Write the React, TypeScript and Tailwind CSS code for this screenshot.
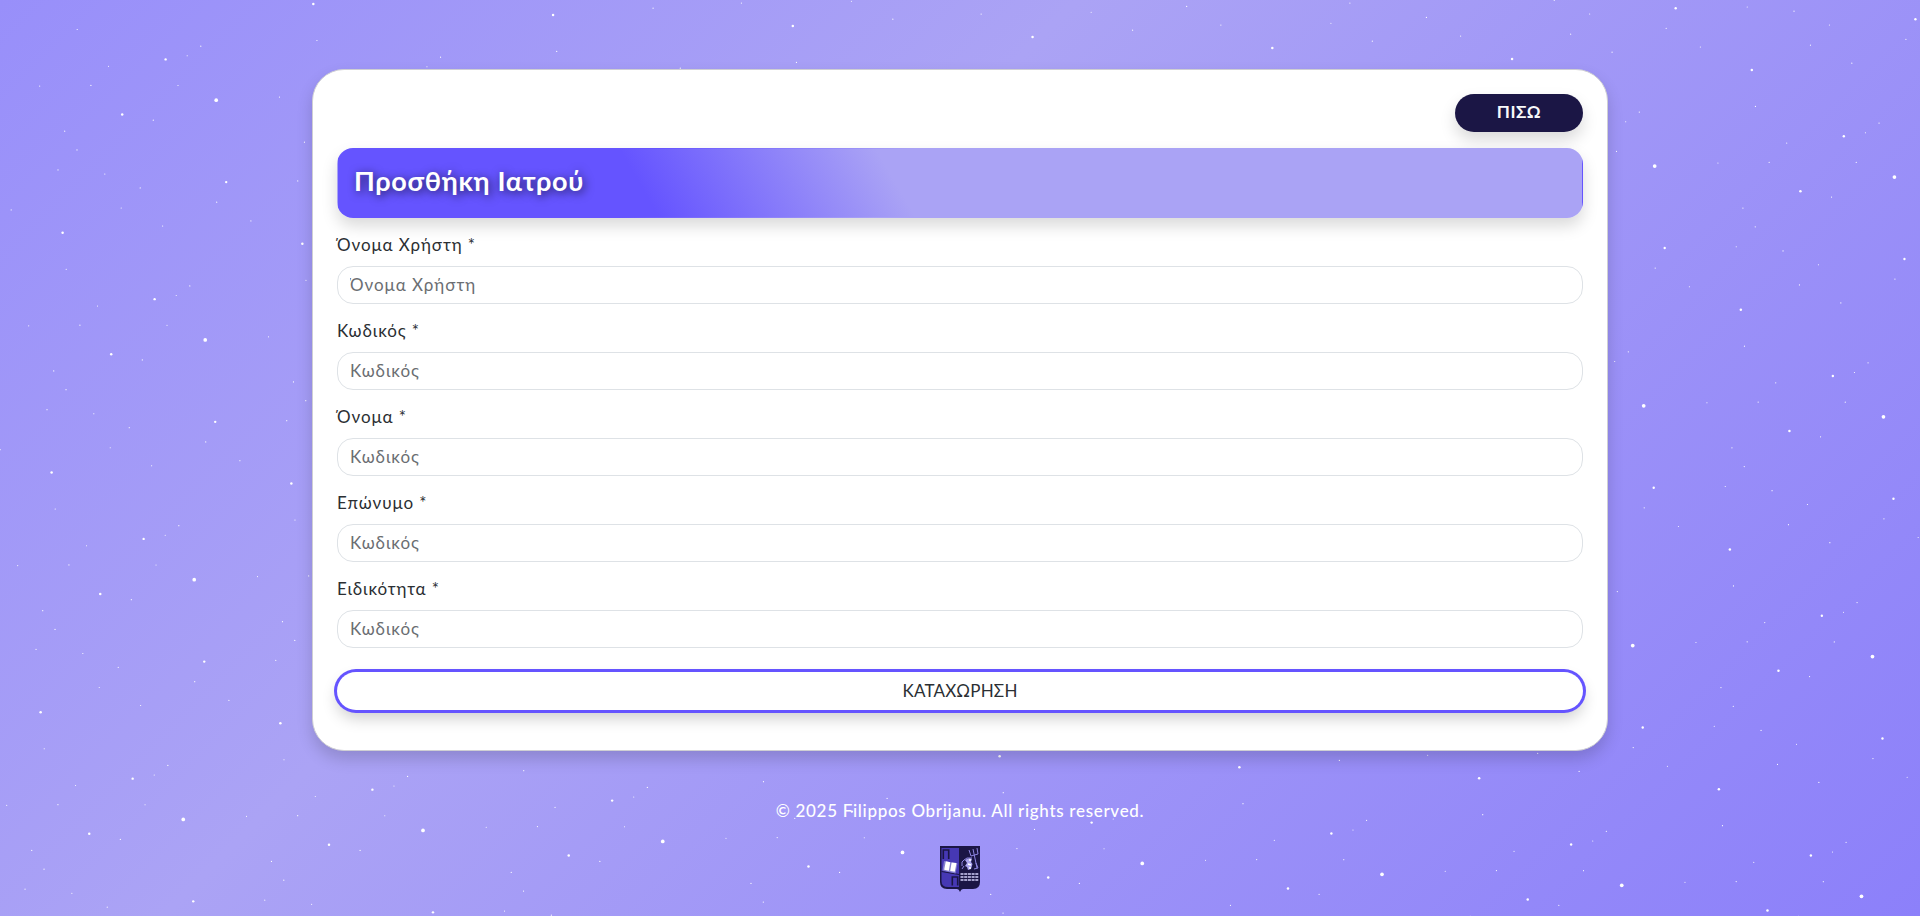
const TILE = 240;
const COS = 0.99895;
const SIN = 0.04577;

// Star positions inside one tile (x, y, radius)
const STARS: [number, number, number][] = [
  [77, 29.3, 0.6], [108.3, 66, 0.55], [39.5, 85.9, 0.55], [90.7, 85.2, 0.6],
  [165.4, 59.2, 1.2], [187, 55.6, 0.55], [200.6, 46, 0.6], [177.8, 85.3, 0.55],
  [216, 100, 1.85], [122, 114.2, 1.25], [153.1, 120, 0.6], [64.5, 131, 0.6],
  [76.8, 149.7, 0.6], [57.8, 169.7, 0.55], [104.6, 173.8, 0.6], [140, 187.7, 0.55],
  [121, 207.8, 0.55], [226, 181.9, 1.2], [216.5, 202, 0.6], [250.7, 220.7, 0.55],
  [162.4, 225.8, 0.6], [62.4, 232.6, 1.25],
];

const COLS = [-2, -1, 0, 1, 2, 3, 4, 5, 6, 7, 8];
const ROWS = [-3, -2, -1, 0, 1, 2, 3, 4];

function Starfield() {
  return (
    <svg className="pointer-events-none absolute inset-0 h-full w-full" viewBox="0 0 1920 916" fill="#fff" aria-hidden="true">
      {ROWS.flatMap((j) =>
        COLS.map((i) => (
          <g key={`${i}:${j}`} transform={`translate(${TILE * (i * COS - j * SIN)} ${TILE * (i * SIN + j * COS)})`}>
            {STARS.map(([x, y, r], n) => (
              <circle key={n} cx={x + 0.2} cy={y + 0.2} r={r} />
            ))}
          </g>
        )),
      )}
    </svg>
  );
}

function Shield() {
  return (
    <svg width="40" height="47" viewBox="0 0 40 47" aria-hidden="true">
      <path d="M0 0H40V36Q40 43 33 43H23Q21 43 20 46Q19 43 17 43H7Q0 43 0 36Z" fill="#1b1645" />
      <path d="M1.5 2H19V41H8Q1.5 41 1.5 35Z" fill="#4638b4" />
      <path d="M3.3 13V4H8.7V13M12.3 39.5V31H17.7V39.5" fill="none" stroke="#1b1645" strokeWidth="1.6" />
      <path d="M1.5 25.5L19 28.5" stroke="#1b1645" strokeWidth="1" />
      <path d="M4 15L17.5 17.5L15.5 27.5L2.5 24.5Z" fill="#8580cf" />
      <path d="M5.8 15.3L10.3 16.3L8.8 24.8L4.2 23.8ZM11.6 16.4L16.5 17L14.8 25.8L10.2 25Z" fill="#fff" />
      <g fill="none" stroke="#8d84e0" strokeWidth="1">
        <path d="M29 4L31 10L38 8L37 2M33 3L37 22" />
        <path d="M22 20Q21 15 24 14Q26 11 32 12M22 23L24 20M36 17L38 22L34 23" />
      </g>
      <path d="M25 14Q29 11 32 13L31 16L32.5 18L31 23L28 24L27 21L25 20L27 17Z" fill="#aaa4ee" />
      <path d="M29 14H31M28 18L31 19M29 22H31" stroke="#fff" strokeWidth="1.4" />
      <path d="M20.5 28H38.5M20.5 31H38.5M20.5 34H38.5" stroke="#d4d1fa" strokeWidth="1.4" strokeDasharray="3 0.7" />
    </svg>
  );
}

const FIELDS = [
  { label: "Όνομα Χρήστη *", placeholder: "Όνομα Χρήστη" },
  { label: "Κωδικός *", placeholder: "Κωδικός" },
  { label: "Όνομα *", placeholder: "Κωδικός" },
  { label: "Επώνυμο *", placeholder: "Κωδικός" },
  { label: "Ειδικότητα *", placeholder: "Κωδικός" },
];

export default function App() {
  return (
    <div className="relative h-[916px] w-full overflow-hidden bg-[linear-gradient(135deg,#988ffa_0%,#aba3f5_38%,#8c80fa_100%)] font-['Lato','Open_Sans',sans-serif] text-[17px] text-[#2b2f33]">
      <Starfield />
      <div className="relative flex flex-col items-center pt-[69px]">
        <main className="flex w-[1296px] flex-col rounded-[32px] border border-[#cfcfd3] bg-white px-6 pt-6 pb-10 shadow-[0_8px_16px_rgba(0,0,0,0.16)]">
          <button className="h-[38px] w-32 self-end rounded-full bg-[#1b1645] pb-0.5 font-bold tracking-[0.5px] text-[#f8f9fa] shadow-[0_8px_16px_rgba(0,0,0,0.15)]">
            ΠΙΣΩ
          </button>
          <header className="mt-4 flex h-[70px] items-center rounded-2xl border border-transparent bg-[linear-gradient(60deg,#6554ff_25%,#aaa3f5_45%)] px-4 pb-1 shadow-[0_8px_16px_rgba(0,0,0,0.15)]">
            <h1 className="text-[27px] leading-8 font-bold tracking-[0.7px] text-white [text-shadow:2px_2px_10px_rgba(0,0,0,0.7)]">
              Προσθήκη Ιατρού
            </h1>
          </header>
          <form className="mt-4 flex flex-col gap-4">
            {FIELDS.map((f) => (
              <label key={f.label} className="flex flex-col gap-2 tracking-[0.9px]">
                <span className="h-6 leading-[22px]">{f.label}</span>
                <input
                  placeholder={f.placeholder}
                  className="h-[38px] rounded-2xl border border-[#dee2e6] px-3 pb-0.5 tracking-[0.95px] placeholder:text-[#6b6e72]"
                />
              </label>
            ))}
            <button
              type="button"
              className="mt-2 h-[38px] rounded-full bg-white pb-px tracking-[0.2px] shadow-[0_0_0_3px_#6554ff,0_8px_16px_rgba(0,0,0,0.2)]"
            >
              ΚΑΤΑΧΩΡΗΣΗ
            </button>
          </form>
        </main>
        <footer className="mt-[47px] flex flex-col items-center text-white">
          <p className="h-6 leading-[25px] font-medium tracking-[0.7px]">© 2025 Filippos Obrijanu. All rights reserved.</p>
          <div className="mt-6">
            <Shield />
          </div>
        </footer>
      </div>
    </div>
  );
}
